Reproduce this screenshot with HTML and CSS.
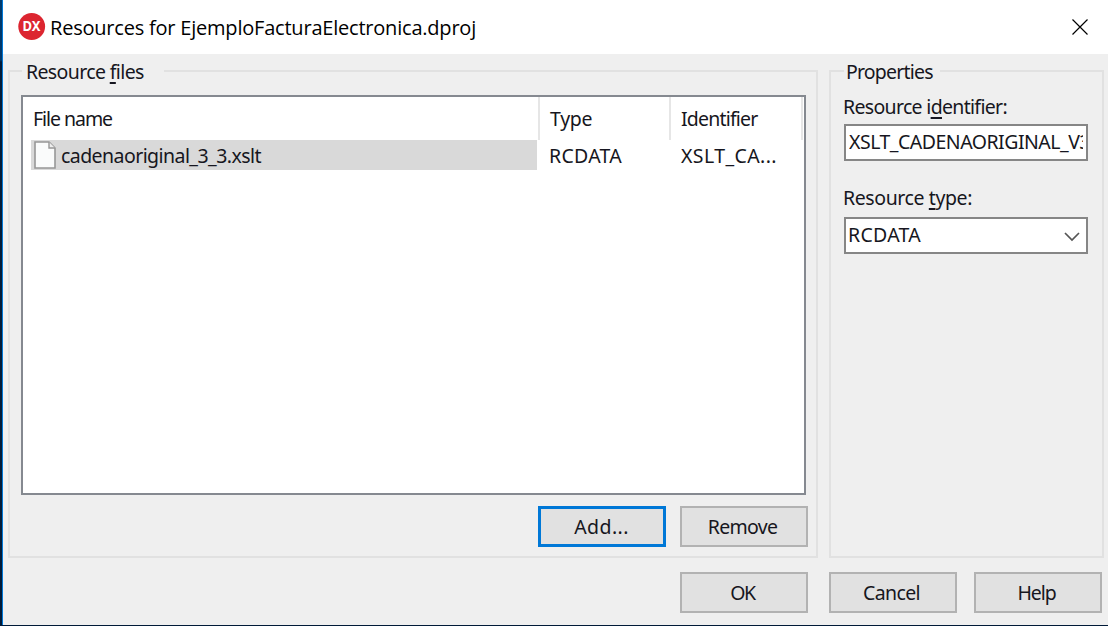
FILE: index.html
```html
<!DOCTYPE html>
<html lang="en">
<head>
<meta charset="utf-8">
<title>Resources for EjemploFacturaElectronica.dproj</title>
<link rel="stylesheet" href="styles.css">
</head>
<body>
<div class="desktop">
  <div class="window">
    <header class="titlebar">
      <svg class="app-icon" width="28" height="28" viewBox="0 0 28 28">
        <circle cx="13.7" cy="13.5" r="13.4" fill="#dc2530"/>
        <text class="app-icon-text" x="13.5" y="18.4" text-anchor="middle" textLength="18" lengthAdjust="spacingAndGlyphs">DX</text>
      </svg>
      <h1 class="title"><span class="t-title">Resources for EjemploFacturaElectronica.dproj</span></h1>
      <svg class="close" width="16" height="16" viewBox="0 0 16 16"><path d="M.5.5l15 15M15.5.5l-15 15" fill="none" stroke="#000" stroke-width="1.2"/></svg>
    </header>
    <main class="content">
      <section class="group files">
        <h2 class="legend legend-files"><span class="t-files">Resource <u>f</u>iles</span></h2>
        <div class="table">
          <div class="row head">
            <div class="cell"><span class="t-filename">File name</span></div>
            <div class="cell"><span class="t-type">Type</span></div>
            <div class="cell"><span class="t-ident">Identifier</span></div>
          </div>
          <div class="row body">
            <div class="cell selected">
              <svg class="file-icon" width="22" height="28" viewBox="0 0 22 28"><path d="M1 1h14l6 6v20H1z" fill="#fafbfb" stroke="#979797" stroke-width="1.6"/><path d="M15 1v6h6" fill="#eee" stroke="#979797" stroke-width="1.4"/></svg>
              <span class="t-xslt">cadenaoriginal_3_3.xslt</span>
            </div>
            <div class="cell"><span class="t-rc">RCDATA</span></div>
            <div class="cell"><span class="t-xsltca">XSLT_CA...</span></div>
          </div>
        </div>
        <div class="actions">
          <button class="button focused"><span class="t-add">Add...</span></button>
          <button class="button"><span class="t-remove">Remove</span></button>
        </div>
      </section>
      <section class="group props">
        <h2 class="legend legend-props"><span class="t-props">Properties</span></h2>
        <div class="label"><span class="t-rid">Resource i<u>d</u>entifier:</span></div>
        <div class="field"><div class="value"><span class="t-value">XSLT_CADENAORIGINAL_V3</span></div></div>
        <div class="label label-type"><span class="t-rtype">Resource <u>t</u>ype:</span></div>
        <div class="field"><div class="value"><span class="t-rc">RCDATA</span></div>
          <svg class="chevron" width="16" height="10" viewBox="0 0 16 10"><path d="M1 1l7 7 7-7" fill="none" stroke="#555" stroke-width="1.7"/></svg>
        </div>
      </section>
    </main>
    <footer class="footer">
      <button class="button ok"><span class="t-ok">OK</span></button>
      <button class="button cancel"><span class="t-cancel">Cancel</span></button>
      <button class="button"><span class="t-help">Help</span></button>
    </footer>
  </div>
</div>
</body>
</html>
```
FILE: styles.css
```css
* { box-sizing: border-box; }
body { margin: 0; }
h1, h2 { margin: 0; font: inherit; }
.desktop {
  width: 1108px;
  height: 626px;
  padding: 0 0 1px 2px;
  background: linear-gradient(#003a6e 0, #00376a 60px, #001a38 62px, #001a38 100%);
  overflow: hidden;
  font: 19.5px/26px "Noto Sans", "Open Sans", sans-serif;
  color: #161620;
}
.window {
  height: 625px;
  border-left: 1px solid #0078d7;
  background: #efefef;
  display: flex;
  flex-direction: column;
}
.titlebar {
  height: 54px;
  display: flex;
  align-items: center;
  padding: 0 20px 0 15px;
  background: #fff;
}
.app-icon { flex: none; }
.app-icon-text { font: bold 13.5px "Noto Sans", sans-serif; fill: #fff; }
.title {
  flex: 1;
  margin-left: 4px;
  padding-top: 1px;
  font: 20px/28px "Open Sans", sans-serif;
  color: #000;
  white-space: nowrap;
}
.content {
  display: grid;
  grid-template-columns: 810px 275px;
  column-gap: 11px;
  height: 488px;
  margin: 16px 0 0 5px;
}
.group {
  position: relative;
  border: 2px solid #e1e1e1;
}
.legend {
  position: absolute;
  top: -13px;
  background: #efefef;
  white-space: nowrap;
}
.legend-files { left: 12px; width: 142px; padding-left: 4px; }
.legend-props { left: 13px; width: 96px; padding-left: 2px; }
u { text-decoration-thickness: 1.5px; text-underline-offset: 3px; text-decoration-skip-ink: none; }
.table {
  width: 785px;
  height: 400px;
  margin: 23px 0 0 11px;
  border: 2px solid #858990;
  background: #fff;
  padding: 0 1px 0 8px;
}
.row {
  display: grid;
  grid-template-columns: 509px 131px 132px;
  height: 30px;
}
.row.head { height: 43px; }
.cell {
  display: flex;
  align-items: center;
  padding-left: 9px;
  white-space: nowrap;
}
.body .cell span { padding-top: 2px; }
.body .cell:last-child { padding-left: 10px; }
.head .cell { border-right: 2px solid #e6e6e6; padding-left: 10px; }
.head .cell:first-child { padding-left: 2px; }
.selected { width: 506px; padding-left: 3px; background: #d9d9d9; }
.file-icon { margin-right: 5px; flex: none; }
.actions {
  display: flex;
  justify-content: flex-end;
  gap: 14px;
  padding: 11px 8px 0 0;
}
.button {
  width: 128px;
  height: 41px;
  padding: 0 3px 0 0;
  border: 2px solid #b2b2b2;
  border-radius: 0;
  background: #e1e1e1;
  color: inherit;
  font: inherit;
}
.button.focused { border: 3px solid #0078d7; padding-right: 1px; }
.props { padding: 22px 14px 0 12px; }
.label { height: 30px; white-space: nowrap; }
.label-type { height: 31px; margin-top: 24px; }
.field {
  display: flex;
  align-items: center;
  width: 244px;
  height: 37px;
  margin-left: 1px;
  border: 2px solid #868686;
  background: #fff;
  padding: 0 3px 2px 3px;
}
.label-type + .field { margin-top: 1px; padding-left: 2px; }
.value { flex: 1; overflow: hidden; white-space: nowrap; }
.chevron { margin: 4px 3px 0 0; flex: none; }
.footer {
  display: flex;
  justify-content: flex-end;
  padding: 14px 6px 0 0;
}
.ok { margin-right: 21px; }
.cancel { margin-right: 17px; }

.t-title { letter-spacing: -.21px; }
.t-files { letter-spacing: -.63px; }
.t-filename { letter-spacing: -1.05px; }
.t-type { letter-spacing: -.3px; }
.t-ident { letter-spacing: -.8px; }
.t-xslt { letter-spacing: -.56px; }
.t-rc { letter-spacing: .3px; }
.t-xsltca { letter-spacing: .4px; }
.t-props { letter-spacing: -.8px; }
.t-rid { letter-spacing: -.68px; }
.t-rtype { letter-spacing: -.4px; }
.t-value { letter-spacing: -.5px; }
.t-add { letter-spacing: .4px; }
.t-remove { letter-spacing: -.7px; }
.t-ok { letter-spacing: -1.5px; }
.t-cancel { letter-spacing: -.6px; }
.t-help { letter-spacing: -1.1px; }
```
